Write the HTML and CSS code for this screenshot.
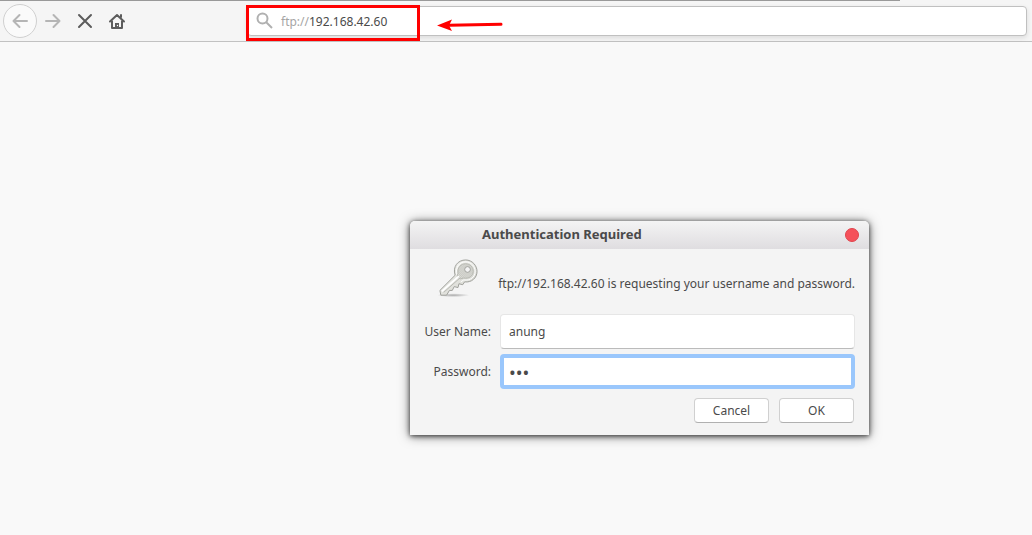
FILE: index.html
```html
<!DOCTYPE html>
<html lang="en">
<head>
    <meta charset="UTF-8">
    <meta name="viewport" content="width=device-width, initial-scale=1.0">
    <title>ftp://192.168.42.60</title>
    <link rel="stylesheet" href="styles.css">
</head>
<body>
    <header class="toolbar">
        <nav class="nav-buttons">
            <button class="nav-button back" aria-label="Back">
                <svg width="18" height="18" viewBox="0 0 18 18"><path d="M8.500 3L2.500 9L8.500 15M2.500 9H16" stroke="#b5b5b5"/></svg>
            </button>
            <button class="nav-button" aria-label="Forward">
                <svg width="18" height="18" viewBox="0 0 18 18"><path d="M9.500 3L15.500 9L9.500 15M15.500 9H2" stroke="#b5b5b5"/></svg>
            </button>
            <button class="nav-button" aria-label="Stop">
                <svg width="18" height="18" viewBox="0 0 18 18"><path d="M3 3L15 15M15 3L3 15" stroke="#5c5c5c"/></svg>
            </button>
            <button class="nav-button" aria-label="Home">
                <svg width="18" height="18" viewBox="0 0 18 18"><path d="M2 9.500L9 3L16 9.500M4 9V16H14V9" stroke="#5c5c5c"/><path class="door" d="M7 16V11H11V16Z"/><path d="M13 3V5" stroke="#5c5c5c"/><circle cx="9.500" cy="13.500" r="0.700" fill="#fff"/></svg>
            </button>
        </nav>
        <div class="url-bar">
            <svg class="search-icon" width="18" height="18" viewBox="0 0 18 18"><circle cx="6.500" cy="6.500" r="5"/><path d="M10 10L16 16"/></svg>
            <label class="scheme" for="url">ftp://</label>
            <input class="url-input" type="text" id="url" value="192.168.42.60">
            <div class="highlight"></div>
            <svg class="arrow" width="66" height="14" viewBox="0 0 66 14"><path d="M12 7.300L64 6.300" stroke="#f00" stroke-width="3" stroke-linecap="round"/><path d="M0 7.500L15 1.500L12 7.500L15 13Z" fill="#f00"/></svg>
        </div>
    </header>

    <form class="dialog" role="dialog" aria-labelledby="dialog-title">
        <div class="title-bar">
            <h1 class="title" id="dialog-title">Authentication Required</h1>
            <button class="close" type="button" aria-label="Close"></button>
        </div>
        <div class="content">
            <div class="message">
                <svg class="key" width="40" height="40" viewBox="0 0 42 42">
                    <defs>
                        <linearGradient id="metal" x1="0" y1="0" x2="1" y2="1">
                            <stop offset="0" stop-color="#f3f3ef"/>
                            <stop offset="1" stop-color="#d2d3cd"/>
                        </linearGradient>
                        <radialGradient id="ground">
                            <stop offset="0" stop-color="#000" stop-opacity="0.3"/>
                            <stop offset="1" stop-color="#000" stop-opacity="0"/>
                        </radialGradient>
                        <pattern id="grip" width="2" height="2" patternUnits="userSpaceOnUse">
                            <rect width="2" height="2" fill="#e2e2dd"/>
                            <path d="M0 0h1v1H0zM1 1h1v1H1z" fill="#bfc0ba"/>
                        </pattern>
                    </defs>
                    <ellipse cx="16" cy="38" rx="17" ry="2" fill="url(#ground)"/>
                    <path d="M18 17C15 8 21 1 29 1C36 1 41 7 41 13C41 20 35 25 28 24L26 27L22 26L21 30L17 29L15 33L12 33L9 38L3 38L2 33Z" fill="url(#metal)" stroke="#9c9d98"/>
                    <path d="M20 17C18 9 22 3 29 3C35 3 39 8 39 13C39 19 34 23 27 22L24 24" fill="none" stroke="#fff"/>
                    <path d="M21 15C20 9 24 5 29 5C34 5 37 9 37 13C37 18 32 21 27 20L23 21L20 18Z" fill="url(#grip)" stroke="#b5b6b0"/>
                    <path d="M4 34L22 18" stroke="#fff" stroke-width="2"/>
                    <path d="M6 35L23 20" stroke="#b5b6b0"/>
                    <circle cx="31" cy="11" r="3" fill="#f4f4f4" stroke="#9c9d98"/>
                </svg>
                <p class="text">ftp://192.168.42.60 is requesting your username and password.</p>
            </div>
            <div class="fields">
                <label for="username">User Name:</label>
                <input class="field" type="text" id="username" value="anung">
                <label for="password">Password:</label>
                <input class="field focused" type="password" id="password" value="abc">
            </div>
            <div class="actions">
                <button class="action" type="button">Cancel</button>
                <button class="action" type="submit">OK</button>
            </div>
        </div>
    </form>
</body>
</html>
```

FILE: styles.css
```css
* {
    box-sizing: border-box;
}

body {
    font-family: "Noto Sans", sans-serif;
    font-size: 12px;
    margin: 0;
    min-height: 100vh;
    color: #4a4a4a;
    background-color: #f9f9f9;
}

input,
button {
    font: inherit;
    color: inherit;
}

/* toolbar */
.toolbar {
    display: flex;
    align-items: center;
    height: 42px;
    padding: 0 5px 0 3px;
    border-bottom: 1px solid #c2c2c2;
    background: linear-gradient(#999, #999) 0 0 / 900px 1px no-repeat #f5f5f5;
}

.nav-buttons {
    display: flex;
    align-items: center;
    flex: 0 0 244px;
}

.nav-button {
    display: flex;
    align-items: center;
    justify-content: center;
    width: 32px;
    height: 34px;
    padding: 0;
    border: none;
    background: none;
}

.nav-button path {
    fill: none;
    stroke-width: 2;
    stroke-linecap: round;
    stroke-linejoin: round;
}

.nav-button .door {
    fill: #5c5c5c;
}

.back {
    width: 34px;
    border: 1px solid #d0d0d0;
    border-radius: 50%;
    background-color: #fafafa;
}

.url-bar {
    position: relative;
    display: flex;
    align-items: center;
    flex: 1;
    height: 30px;
    padding: 0 8px;
    border: 1px solid #c0c0c0;
    border-radius: 4px;
    background-color: #fff;
    box-shadow: 0 2px 5px rgba(0, 0, 0, 0.1);
}

.search-icon {
    margin-right: 7px;
    fill: none;
    stroke: #b0b0b0;
    stroke-width: 2;
}

.scheme {
    padding-top: 1px;
    color: #a5a5a5;
}

.url-input {
    flex: 1;
    min-width: 0;
    padding: 1px 0 0;
    border: none;
    outline: none;
    background: none;
}

/* red marker around the address */
.highlight {
    position: absolute;
    top: -2px;
    left: -2px;
    width: 174px;
    height: 36px;
    border: 3px solid #f00;
}

.arrow {
    position: absolute;
    top: 11px;
    left: 189px;
}

/* login window */
.dialog {
    position: absolute;
    top: 221px;
    left: 410px;
    width: 459px;
    border-radius: 5px 5px 0 0;
    background-color: #f4f4f4;
    box-shadow: 0 1px 5px rgba(0, 0, 0, 0.7), 0 1px 12px rgba(0, 0, 0, 0.5);
}

.title-bar {
    display: flex;
    align-items: center;
    height: 28px;
    padding: 0 10px;
    border-radius: 5px 5px 0 0;
    background: linear-gradient(#f4f4f4, #dfdde0);
}

.title {
    flex: 1;
    margin: 0;
    padding: 0 0 2px 62px;
    font-size: 13px;
    line-height: 18px;
}

.close {
    width: 14px;
    height: 14px;
    padding: 0;
    border: 1px solid #e0444d;
    border-radius: 50%;
    background-color: #f5515a;
}

.content {
    padding: 10px 14px 12px;
}

.message {
    display: flex;
    align-items: center;
    height: 48px;
    padding-left: 14px;
}

.key {
    align-self: flex-start;
}

.text {
    flex: 1;
    margin: 0;
    text-align: right;
    white-space: nowrap;
}

.fields {
    display: grid;
    grid-template-columns: 67px 1fr;
    gap: 5px 9px;
    align-items: center;
    margin-top: 7px;
    text-align: right;
}

.field {
    width: 100%;
    height: 35px;
    padding: 0 8px;
    border: 1px solid #e6e6e6;
    border-bottom-color: #bbb;
    border-radius: 4px;
    outline: none;
    background-color: #fff;
}

.focused {
    padding: 0 5px;
    border: 4px solid #9ac7fc;
    font-size: 18px;
}

.actions {
    display: flex;
    justify-content: flex-end;
    gap: 10px;
    margin-top: 9px;
    padding-right: 1px;
}

.action {
    width: 75px;
    height: 25px;
    padding: 0;
    border: 1px solid #d0d0d0;
    border-bottom-color: #b0b0b0;
    border-radius: 4px;
    background-color: #fff;
}
```
